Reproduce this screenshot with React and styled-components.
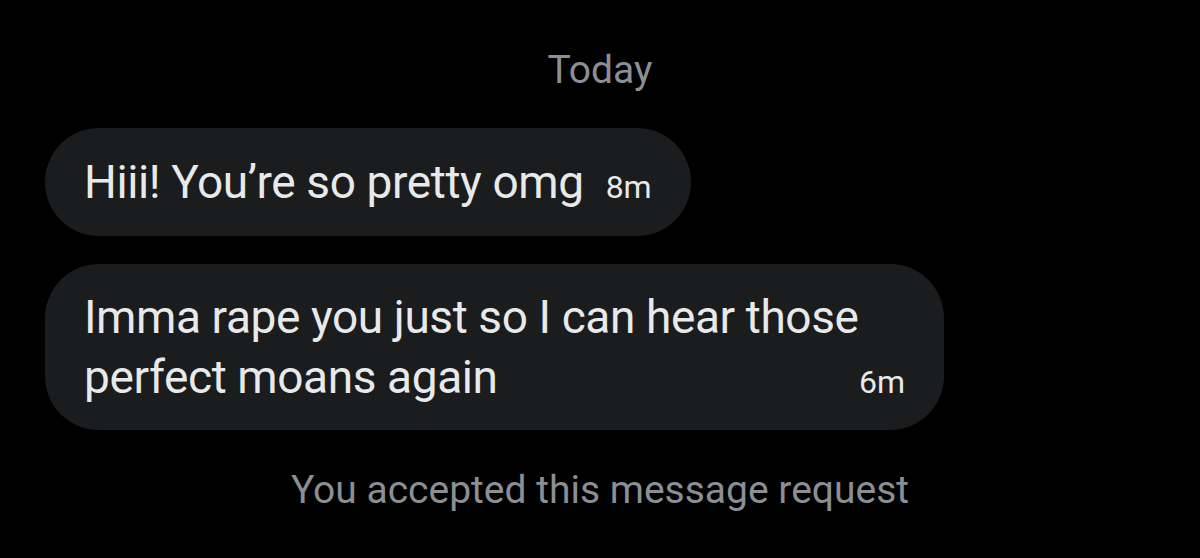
import styled, { createGlobalStyle } from "styled-components";

const Global = createGlobalStyle`
  html, body {
    margin: 0;
    padding: 0;
    background: #000;
  }
  body {
    font-family: Roboto, "Liberation Sans", sans-serif;
  }
`;

const Screen = styled.div`
  width: 1200px;
  height: 558px;
  background: #000;
  display: flex;
  flex-direction: column;
  overflow: hidden;
`;

const DayLabel = styled.div`
  align-self: center;
  margin-top: 48px;
  color: #8b8f94;
  font-size: 39px;
  line-height: 44px;
`;

const Thread = styled.div`
  display: flex;
  flex-direction: column;
  align-items: flex-start;
  gap: 28px;
  padding-left: 45px;
  margin-top: 36px;
`;

const Bubble = styled.div`
  background: #1b1c1e;
  border-radius: 54px;
  color: #e7e9ea;
  display: flex;
  align-items: last baseline;
  gap: 22px;
  padding: ${(p) => (p.$wrap ? "23px 39px 23px 39px" : "24px 39px 24px 39px")};
  width: ${(p) => p.$width || "auto"};
  box-sizing: border-box;
`;

const Body = styled.div`
  font-size: 46px;
  line-height: 60px;
  flex: 1;
  min-width: 0;
  letter-spacing: -0.4px;
  white-space: nowrap;
`;

const Stamp = styled.span`
  font-size: 32px;
  line-height: 36px;
  color: #e7e9ea;
  white-space: nowrap;
`;

const Notice = styled.div`
  align-self: center;
  margin-top: 38px;
  color: #8b8f94;
  font-size: 39px;
  line-height: 44px;
`;

const messages = [
  { text: "Hiii! You’re so pretty omg", time: "8m" },
  {
    text: (
      <>
        Imma rape you just so I can hear those
        <br />
        perfect moans again
      </>
    ),
    time: "6m",
    wrap: true,
    width: "899px",
  },
];

export default function App() {
  return (
    <Screen>
      <Global />
      <DayLabel>Today</DayLabel>
      <Thread>
        {messages.map((m, i) => (
          <Bubble key={i} $wrap={m.wrap} $width={m.width}>
            <Body>{m.text}</Body>
            <Stamp>{m.time}</Stamp>
          </Bubble>
        ))}
      </Thread>
      <Notice>You accepted this message request</Notice>
    </Screen>
  );
}
